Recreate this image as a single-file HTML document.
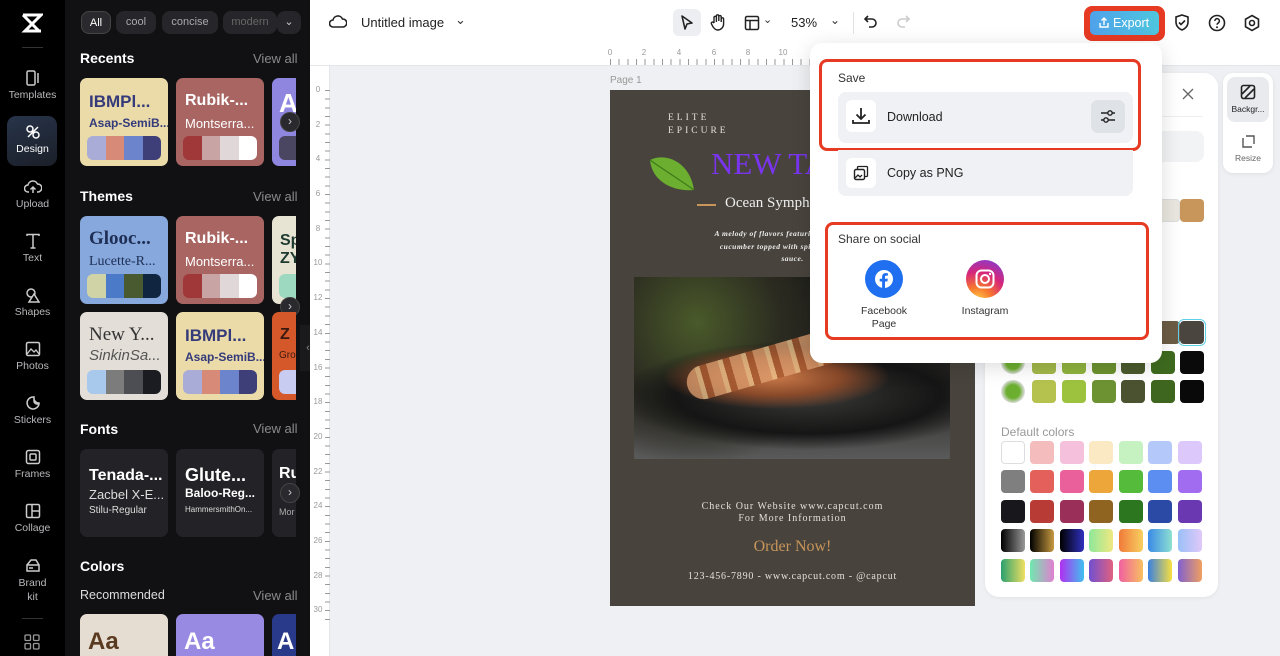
<!DOCTYPE html>
<html><head><meta charset="utf-8"><style>
*{box-sizing:border-box;margin:0;padding:0}
body{width:1280px;height:656px;overflow:hidden;position:relative;font-family:"Liberation Sans",sans-serif;background:#eef0f3}
.a{position:absolute}
.rail{left:0;top:0;width:65px;height:656px;background:#000;overflow:hidden}
.ri{position:absolute;left:0;width:65px;text-align:center;color:#b8b8bc;font-size:10.5px}
.ri svg{display:block;margin:0 auto 3px}
.panel{left:65px;top:0;width:245px;height:656px;background:#111113;overflow:hidden}
.chip{position:absolute;top:11px;height:23px;border-radius:8px;background:#26262a;color:#a8a8ac;font-size:11px;line-height:23px;text-align:center}
.h{position:absolute;left:15px;color:#fff;font-weight:bold;font-size:14px}
.va{position:absolute;left:188px;color:#8a8a8e;font-size:13px}
.card{position:absolute;width:88px;height:88px;border-radius:7px;overflow:hidden}
.card .t1{position:absolute;left:9px;top:14px;font-weight:bold;font-size:16px;white-space:nowrap}
.card .t2{position:absolute;left:9px;top:38px;font-size:12px;white-space:nowrap}
.pal{position:absolute;left:7px;top:58px;width:74px;height:24px;border-radius:6px;overflow:hidden;display:flex}
.pal i{flex:1}
.arr{position:absolute;width:20px;height:20px;border-radius:50%;background:#2a2a2e;border:1px solid #444;color:#ccc;font-size:12px;line-height:17px;text-align:center}
.top{left:310px;top:0;width:970px;height:46px;background:#fff}
.sw{position:absolute;width:24px;height:23px;border-radius:4px}
.ser{font-family:"Liberation Serif",serif}
.tn{position:absolute;top:48px;font-size:8px;color:#999;width:16px;text-align:center}
.ln{position:absolute;left:311px;font-size:8px;color:#999;width:14px;text-align:center}
</style></head><body>

<!-- left rail -->
<div class="a rail">
 <svg class="a" style="left:21px;top:13px" width="22" height="20" viewBox="0 0 22 20"><path d="M2 2h18L4 18h16M2 2l16 16M4 2l14 0" stroke="#fff" stroke-width="3" fill="none"/></svg>
 <div class="a" style="left:22px;top:47px;width:21px;height:1px;background:#333"></div>
 <div class="ri" style="top:70px"><svg width="16" height="16"><rect x="2" y="1" width="8" height="14" rx="1.5" fill="none" stroke="#ccc" stroke-width="1.5"/><path d="M13 3v10" stroke="#ccc" stroke-width="1.5"/></svg>Templates</div>
 <div class="a" style="left:7px;top:116px;width:50px;height:50px;border-radius:9px;background:linear-gradient(160deg,#27344a,#1b1f28)"></div>
 <div class="ri" style="top:124px;color:#fff"><svg width="16" height="16"><circle cx="5" cy="5" r="3" fill="none" stroke="#fff" stroke-width="1.5"/><circle cx="11" cy="11" r="3" fill="none" stroke="#fff" stroke-width="1.5"/><path d="M3 13L13 3" stroke="#fff" stroke-width="1.5"/></svg>Design</div>
 <div class="ri" style="top:179px"><svg width="18" height="16"><path d="M5 13H4a3.5 3.5 0 010-7 5 5 0 019.5-1A3.5 3.5 0 0114 13h-1M9 14V8M6.5 10.5L9 8l2.5 2.5" fill="none" stroke="#ccc" stroke-width="1.5"/></svg>Upload</div>
 <div class="ri" style="top:233px"><svg width="16" height="16"><path d="M2 3V1.5h12V3M8 1.5V15M5.5 15h5" fill="none" stroke="#ccc" stroke-width="1.5"/></svg>Text</div>
 <div class="ri" style="top:287px"><svg width="16" height="16"><circle cx="6" cy="6" r="4" fill="none" stroke="#ccc" stroke-width="1.5"/><path d="M9 7l5 8H4z" fill="#000" stroke="#ccc" stroke-width="1.5"/></svg>Shapes</div>
 <div class="ri" style="top:341px"><svg width="16" height="16"><rect x="1.5" y="1.5" width="13" height="13" rx="1.5" fill="none" stroke="#ccc" stroke-width="1.5"/><path d="M2 13l4-5 3 3 2-2 3 4" fill="none" stroke="#ccc" stroke-width="1.3"/></svg>Photos</div>
 <div class="ri" style="top:395px"><svg width="16" height="16"><path d="M14 9A6 6 0 118 2h1a5 5 0 005 6z M9 2v4a3 3 0 003 3h2" fill="none" stroke="#ccc" stroke-width="1.5"/></svg>Stickers</div>
 <div class="ri" style="top:449px"><svg width="16" height="16"><rect x="1.5" y="1.5" width="13" height="13" rx="2" fill="none" stroke="#ccc" stroke-width="1.5"/><rect x="5" y="5" width="6" height="6" rx="1" fill="none" stroke="#ccc" stroke-width="1.5"/></svg>Frames</div>
 <div class="ri" style="top:503px"><svg width="16" height="16"><rect x="1.5" y="1.5" width="13" height="13" rx="1.5" fill="none" stroke="#ccc" stroke-width="1.5"/><path d="M7 2v12M7 8h7" stroke="#ccc" stroke-width="1.5"/></svg>Collage</div>
 <div class="ri" style="top:557px;line-height:14px"><svg width="16" height="16"><path d="M2 8h12v6H2zM2 8l4-5h5l3 5M4 11h4" fill="none" stroke="#ccc" stroke-width="1.5"/></svg>Brand<br>kit</div>
 <div class="a" style="left:22px;top:618px;width:21px;height:1px;background:#333"></div>
 <svg class="a" style="left:24px;top:634px" width="16" height="16"><g fill="none" stroke="#999" stroke-width="1.3"><rect x="1" y="1" width="5.5" height="5.5" rx="1"/><rect x="9.5" y="1" width="5.5" height="5.5" rx="1"/><rect x="1" y="9.5" width="5.5" height="5.5" rx="1"/><rect x="9.5" y="9.5" width="5.5" height="5.5" rx="1"/></g></svg>
</div>

<!-- panel -->
<div class="a panel">
 <div class="chip" style="left:16px;width:30px;color:#fff;background:#2a2a2e;border:1px solid #444">All</div>
 <div class="chip" style="left:51px;width:40px">cool</div>
 <div class="chip" style="left:97px;width:56px">concise</div>
 <div class="chip" style="left:158px;width:54px;color:#666">modern</div>
 <div class="chip" style="left:212px;width:24px;color:#ccc">⌄</div>

 <div class="h" style="top:50px">Recents</div><div class="va" style="top:51px">View all</div>
 <div class="card" style="left:15px;top:78px;background:#eadba9"><div class="t1" style="color:#343a7a;font-size:17px">IBMPl...</div><div class="t2" style="color:#343a7a;font-weight:bold">Asap-SemiB...</div><div class="pal"><i style="background:#a9acd6"></i><i style="background:#d88a78"></i><i style="background:#6c84cc"></i><i style="background:#3e3f78"></i></div></div>
 <div class="card" style="left:111px;top:78px;background:#a86562"><div class="t1" style="color:#fff">Rubik-...</div><div class="t2" style="color:#fff;font-size:13px">Montserra...</div><div class="pal"><i style="background:#a0383a"></i><i style="background:#c9a4a4"></i><i style="background:#e0d8d8"></i><i style="background:#fff"></i></div></div>
 <div class="card" style="left:207px;top:78px;width:24px;background:#8f86e0;border-radius:7px 0 0 7px"><div class="t1" style="color:#fff;font-size:26px;left:7px;top:10px">A</div><div class="pal" style="background:#4a4560"></div></div>
 <div class="arr" style="left:215px;top:112px">›</div>

 <div class="h" style="top:188px">Themes</div><div class="va" style="top:189px">View all</div>
 <div class="card" style="left:15px;top:216px;background:#86a8dc"><div class="t1 ser" style="color:#1e2e55;font-size:19px;top:12px">Glooc...</div><div class="t2 ser" style="color:#1e2e55;font-size:14px">Lucette-R...</div><div class="pal"><i style="background:#cfd3a6"></i><i style="background:#4a7ac8"></i><i style="background:#4a5a30"></i><i style="background:#102640"></i></div></div>
 <div class="card" style="left:111px;top:216px;background:#a86562"><div class="t1" style="color:#fff">Rubik-...</div><div class="t2" style="color:#fff;font-size:13px">Montserra...</div><div class="pal"><i style="background:#a0383a"></i><i style="background:#c9a4a4"></i><i style="background:#e0d8d8"></i><i style="background:#fff"></i></div></div>
 <div class="card" style="left:207px;top:216px;width:24px;background:#e8e4d4;border-radius:7px 0 0 7px"><div class="t1" style="color:#1e3a30;left:8px;top:16px">Sp<br>ZY</div><div class="pal" style="background:#9dd8c0"></div></div>
 <div class="arr" style="left:215px;top:297px">›</div>
 <div class="card" style="left:15px;top:312px;background:#e3dfd8"><div class="t1 ser" style="color:#333;font-weight:normal;font-size:19px;top:12px">New Y...</div><div class="t2" style="color:#555;font-style:italic;font-size:15px;top:35px">SinkinSa...</div><div class="pal"><i style="background:#a8c8ec"></i><i style="background:#7c7c7c"></i><i style="background:#4c4e54"></i><i style="background:#1b1c22"></i></div></div>
 <div class="card" style="left:111px;top:312px;background:#eadba9"><div class="t1" style="color:#343a7a;font-size:17px">IBMPl...</div><div class="t2" style="color:#343a7a;font-weight:bold">Asap-SemiB...</div><div class="pal"><i style="background:#a9acd6"></i><i style="background:#d88a78"></i><i style="background:#6c84cc"></i><i style="background:#3e3f78"></i></div></div>
 <div class="card" style="left:207px;top:312px;width:24px;background:#d4582a;border-radius:7px 0 0 7px"><div class="t1" style="color:#3a1a10;left:8px">Z</div><div class="t2" style="color:#3a1a10;font-size:10px;left:7px">Gro</div><div class="pal" style="background:#c8ccf0"></div></div>

 <div class="h" style="top:421px">Fonts</div><div class="va" style="top:421px">View all</div>
 <div class="card" style="left:15px;top:449px;background:#232327"><div class="t1" style="color:#fff;top:18px">Tenada-...</div><div class="t2" style="color:#ddd;font-size:13px;top:38px">Zacbel X-E...</div><div class="t2" style="color:#ddd;font-size:10px;top:56px">Stilu-Regular</div></div>
 <div class="card" style="left:111px;top:449px;background:#232327"><div class="t1" style="color:#fff;top:16px;font-size:18px">Glute...</div><div class="t2" style="color:#fff;font-weight:bold;top:37px">Baloo-Reg...</div><div class="t2" style="color:#ddd;font-size:8px;top:56px">HammersmithOn...</div></div>
 <div class="card" style="left:207px;top:449px;width:24px;background:#232327;border-radius:7px 0 0 7px"><div class="t1" style="color:#fff;left:7px;top:16px">Ru</div><div class="t2" style="color:#aaa;font-size:9px;left:7px;top:58px">Mor</div></div>
 <div class="arr" style="left:215px;top:483px">›</div>

 <div class="h" style="top:558px">Colors</div>
 <div class="a" style="left:15px;top:588px;color:#ddd;font-size:12.5px">Recommended</div><div class="va" style="top:588px">View all</div>
 <div class="card" style="left:15px;top:614px;background:#e6ddd2;height:42px;border-radius:7px 7px 0 0"><div class="t1" style="color:#5a3a20;font-size:24px;top:14px;left:8px">Aa</div></div>
 <div class="card" style="left:111px;top:614px;background:#9889e3;height:42px;border-radius:7px 7px 0 0"><div class="t1" style="color:#fff;font-size:24px;top:14px;left:8px">Aa</div></div>
 <div class="card" style="left:207px;top:614px;width:24px;background:#2a3a8a;height:42px;border-radius:7px 0 0 0"><div class="t1" style="color:#fff;font-size:24px;top:14px;left:5px">A</div></div>
</div>
<div class="a" style="left:300px;top:325px;width:16px;height:46px;background:#1a1a1c;border-radius:0 8px 8px 0;color:#888;font-size:11px;line-height:46px;text-align:center">‹</div>

<!-- canvas rulers -->
<div class="a" style="left:310px;top:46px;width:970px;height:20px;background:#fff;border-bottom:1px solid #e4e6ea"></div>
<div class="a" style="left:610px;top:59px;width:200px;height:6px;background:repeating-linear-gradient(90deg,#999 0 1px,transparent 1px 8.67px)"></div>
<div class="a" style="left:310px;top:66px;width:20px;height:590px;background:#fff;border-right:1px solid #e4e6ea"></div>
<div class="a" style="left:325px;top:90px;width:5px;height:530px;background:repeating-linear-gradient(180deg,#999 0 1px,transparent 1px 8.67px)"></div>
<span class="tn" style="left:602px">0</span><span class="tn" style="left:636px">2</span><span class="tn" style="left:671px">4</span><span class="tn" style="left:706px">6</span><span class="tn" style="left:740px">8</span><span class="tn" style="left:775px">10</span>
<span class="ln" style="top:85px">0</span><span class="ln" style="top:120px">2</span><span class="ln" style="top:154px">4</span><span class="ln" style="top:189px">6</span><span class="ln" style="top:224px">8</span><span class="ln" style="top:258px">10</span><span class="ln" style="top:293px">12</span><span class="ln" style="top:328px">14</span><span class="ln" style="top:363px">16</span><span class="ln" style="top:397px">18</span><span class="ln" style="top:432px">20</span><span class="ln" style="top:467px">22</span><span class="ln" style="top:501px">24</span><span class="ln" style="top:536px">26</span><span class="ln" style="top:571px">28</span><span class="ln" style="top:605px">30</span>

<!-- top bar -->
<div class="a top">
 <svg class="a" style="left:19px;top:14px" width="18" height="16"><path d="M5 13H4a3.5 3.5 0 010-7 5 5 0 019.5-1A3.5 3.5 0 0114 13H5z" fill="none" stroke="#222" stroke-width="1.6"/></svg>
 <div class="a" style="left:51px;top:15px;font-size:13px;color:#222">Untitled image</div>
 <div class="a" style="left:145px;top:12px;font-size:13px;color:#333">⌄</div>
 <div class="a" style="left:363px;top:9px;width:28px;height:27px;border-radius:6px;background:#eceef1"></div>
 <svg class="a" style="left:369px;top:14px" width="16" height="17"><path d="M3 2l10 7-5 1-2 5z" fill="none" stroke="#222" stroke-width="1.6" stroke-linejoin="round"/></svg>
 <svg class="a" style="left:399px;top:13px" width="18" height="18"><path d="M5 10V4.5a1.2 1.2 0 012.4 0V9M7.4 8V3a1.2 1.2 0 012.4 0v5M9.8 8V3.8a1.2 1.2 0 012.4 0V9M12.2 9V6a1.2 1.2 0 012.4 0v5a6 6 0 01-6 6c-2 0-3-1-4.5-3L2.5 11a1.2 1.2 0 012-1.4L5 10" fill="none" stroke="#222" stroke-width="1.4"/></svg>
 <svg class="a" style="left:434px;top:15px" width="16" height="16"><rect x="1.5" y="1.5" width="13" height="13" rx="1.5" fill="none" stroke="#222" stroke-width="1.5"/><path d="M2 5.5h12M6 5.5V14" stroke="#222" stroke-width="1.5"/></svg>
 <div class="a" style="left:453px;top:13px;font-size:11px;color:#333">⌄</div>
 <div class="a" style="left:481px;top:15px;font-size:13px;color:#222">53%</div>
 <div class="a" style="left:520px;top:13px;font-size:12px;color:#333">⌄</div>
 <div class="a" style="left:543px;top:12px;width:1px;height:22px;background:#e2e2e2"></div>
 <svg class="a" style="left:553px;top:14px" width="16" height="16"><path d="M5 2L2 5l3 3M2 5h7a4 4 0 010 8H6" fill="none" stroke="#222" stroke-width="1.6"/></svg>
 <svg class="a" style="left:585px;top:14px" width="16" height="16"><path d="M11 2l3 3-3 3M14 5H7a4 4 0 000 8h3" fill="none" stroke="#ccc" stroke-width="1.6"/></svg>
 <div class="a" style="left:774px;top:6px;width:81px;height:35px;border-radius:8px;background:#e63a22"></div>
 <div class="a" style="left:780px;top:11px;width:69px;height:24px;border-radius:5px;background:linear-gradient(90deg,#4fa2ea,#4ec6de);color:#fff;font-size:12.5px;line-height:24px;padding-left:23px">Export</div>
 <svg class="a" style="left:788px;top:16px" width="12" height="13"><path d="M2 7v4h8V7M6 9V2M3.5 4.5L6 2l2.5 2.5" fill="none" stroke="#fff" stroke-width="1.4"/></svg>
 <svg class="a" style="left:863px;top:13px" width="18" height="19"><path d="M9 2l6 2v5c0 4-3 7-6 8-3-1-6-4-6-8V4z M6 9.5l2 2 4-4" fill="none" stroke="#222" stroke-width="1.6"/></svg>
 <svg class="a" style="left:898px;top:14px" width="18" height="18"><circle cx="9" cy="9" r="7.5" fill="none" stroke="#222" stroke-width="1.6"/><path d="M6.8 7a2.3 2.3 0 114 1.5c-.8.7-1.8 1-1.8 2.3" fill="none" stroke="#222" stroke-width="1.5"/><circle cx="9" cy="13.3" r="1" fill="#222"/></svg>
 <svg class="a" style="left:933px;top:14px" width="18" height="18"><path d="M9 1.5l6.5 3.75v7.5L9 16.5l-6.5-3.75v-7.5z" fill="none" stroke="#222" stroke-width="1.6"/><circle cx="9" cy="9" r="2.5" fill="none" stroke="#222" stroke-width="1.6"/></svg>
</div>

<!-- poster -->
<div class="a" style="left:610px;top:75px;font-size:10px;color:#999">Page 1</div>
<div class="a" style="left:610px;top:90px;width:365px;height:516px;background:#48443d;overflow:hidden">
 <div class="a ser" style="left:58px;top:22px;color:#e4e0d8;font-size:9.5px;letter-spacing:3px;line-height:12.5px">ELITE<br>EPICURE</div>
 <svg class="a" style="left:36px;top:62px" width="52" height="42"><path d="M4 8C20 0 44 10 48 38 28 40 6 30 4 8z" fill="#6cae30"/><path d="M4 8C18 18 34 28 48 38" stroke="#3e7a18" stroke-width="1.2" fill="none"/></svg>
 <div class="a ser" style="left:101px;top:56px;color:#7a34f0;font-size:31px;white-space:nowrap">NEW TASTE</div>
 <div class="a" style="left:87px;top:114px;width:19px;height:1.5px;background:#c8955a"></div>
 <div class="a ser" style="left:115px;top:105px;color:#eee;font-size:15px;white-space:nowrap">Ocean Symphony</div>
 <div class="a ser" style="left:0;top:138px;width:365px;text-align:center;color:#eee;font-size:7.5px;font-style:italic;font-weight:bold;line-height:12.5px;letter-spacing:.5px">A melody of flavors featuring fresh salmon,<br>cucumber topped with spicy tuna and eel<br>sauce.</div>
 <div class="a" style="left:24px;top:187px;width:316px;height:182px;background:radial-gradient(ellipse 45% 22% at 45% 55%,#c87848 0,#8a4a2a 45%,transparent 80%),radial-gradient(ellipse 60% 30% at 55% 65%,#3a3a38 0,#151515 70%,transparent 100%),radial-gradient(circle at 20% 25%,#4a5a2a 0,#2a2a20 30%,transparent 50%),linear-gradient(180deg,#1a1a18,#2a2826 60%,#5a5a5a 100%)"></div>
 <div class="a" style="left:74px;top:255px;width:180px;height:34px;border-radius:18px;background:repeating-linear-gradient(90deg,#e0a070 0 12px,#f0c890 12px 17px,#a85a30 17px 24px);transform:rotate(-16deg);opacity:.75"></div>
 <div class="a ser" style="left:0;top:411px;width:365px;text-align:center;color:#e4e0d8;font-size:10px;letter-spacing:1px;line-height:12px">Check Our Website www.capcut.com<br>For More Information</div>
 <div class="a ser" style="left:0;top:448px;width:365px;text-align:center;color:#c8955a;font-size:16px">Order Now!</div>
 <div class="a ser" style="left:0;top:481px;width:365px;text-align:center;color:#e4e0d8;font-size:10px;letter-spacing:.8px">123-456-7890 - www.capcut.com - @capcut</div>
</div>

<!-- right side panel -->
<div class="a" style="left:985px;top:73px;width:233px;height:524px;background:#fff;border-radius:14px;box-shadow:0 1px 4px rgba(0,0,0,.06)">
 <svg class="a" style="left:197px;top:15px" width="12" height="12"><path d="M1 1l10 10M11 1L1 11" stroke="#666" stroke-width="1.3"/></svg>
 <div class="a" style="left:15px;top:43px;width:203px;height:1px;background:#eee"></div>
 <div class="a" style="left:15px;top:58px;width:204px;height:31px;border-radius:8px;background:#f2f3f5"></div>
 <div class="a" style="left:16px;top:352px;font-size:12px;color:#999">Default colors</div>
</div>
<div class="sw" style="left:1156px;top:199px;background:#e8e6de;border:1px solid #ddd"></div>
<div class="sw" style="left:1180px;top:199px;background:#c8955a"></div>
<div class="sw" style="left:1156px;top:321px;background:#6c5c45"></div>
<div class="sw" style="left:1180px;top:321px;background:#4a453e;outline:1.5px solid #60d0e8;outline-offset:1px"></div>
<div class="sw" style="left:1001px;top:351px;background:radial-gradient(circle,#6cae30 40%,#ddd 70%);border-radius:50%"></div>
<div class="sw" style="left:1032px;top:351px;background:#a3b84a"></div><div class="sw" style="left:1062px;top:351px;background:#8fb33e"></div><div class="sw" style="left:1092px;top:351px;background:#6c922e"></div><div class="sw" style="left:1121px;top:351px;background:#4b5a2c"></div><div class="sw" style="left:1151px;top:351px;background:#3e6b1f"></div><div class="sw" style="left:1180px;top:351px;background:#0a0a0a"></div>
<div class="sw" style="left:1001px;top:380px;background:radial-gradient(circle,#6cae30 40%,#ddd 70%);border-radius:50%"></div>
<div class="sw" style="left:1032px;top:380px;background:#b5c24e"></div><div class="sw" style="left:1062px;top:380px;background:#9cc23e"></div><div class="sw" style="left:1092px;top:380px;background:#6c9232"></div><div class="sw" style="left:1121px;top:380px;background:#4a5230"></div><div class="sw" style="left:1151px;top:380px;background:#3e661e"></div><div class="sw" style="left:1180px;top:380px;background:#090909"></div>

<div class="sw" style="left:1001px;top:441px;background:#fff;border:1px solid #ddd"></div><div class="sw" style="left:1030px;top:441px;background:#f4bcbc"></div><div class="sw" style="left:1060px;top:441px;background:#f5c0dc"></div><div class="sw" style="left:1089px;top:441px;background:#fbe9c4"></div><div class="sw" style="left:1119px;top:441px;background:#c5f2c0"></div><div class="sw" style="left:1148px;top:441px;background:#b5c8fa"></div><div class="sw" style="left:1178px;top:441px;background:#dcc8fa"></div>
<div class="sw" style="left:1001px;top:470px;background:#7f7f7f"></div><div class="sw" style="left:1030px;top:470px;background:#e4605a"></div><div class="sw" style="left:1060px;top:470px;background:#e9609a"></div><div class="sw" style="left:1089px;top:470px;background:#eca63a"></div><div class="sw" style="left:1119px;top:470px;background:#55bb3a"></div><div class="sw" style="left:1148px;top:470px;background:#5b8ef0"></div><div class="sw" style="left:1178px;top:470px;background:#a26cf0"></div>
<div class="sw" style="left:1001px;top:500px;background:#17171c"></div><div class="sw" style="left:1030px;top:500px;background:#b83b35"></div><div class="sw" style="left:1060px;top:500px;background:#9a2f5a"></div><div class="sw" style="left:1089px;top:500px;background:#8e6420"></div><div class="sw" style="left:1119px;top:500px;background:#2d7620"></div><div class="sw" style="left:1148px;top:500px;background:#2a4aa6"></div><div class="sw" style="left:1178px;top:500px;background:#6a38b0"></div>
<div class="sw" style="left:1001px;top:529px;background:linear-gradient(90deg,#000,#999)"></div><div class="sw" style="left:1030px;top:529px;background:linear-gradient(90deg,#000,#c89a40)"></div><div class="sw" style="left:1060px;top:529px;background:linear-gradient(90deg,#000,#3030c0)"></div><div class="sw" style="left:1089px;top:529px;background:linear-gradient(90deg,#8ee89a,#f0e880)"></div><div class="sw" style="left:1119px;top:529px;background:linear-gradient(90deg,#f07a3a,#f8d060)"></div><div class="sw" style="left:1148px;top:529px;background:linear-gradient(90deg,#3a8ae8,#8ee0d0)"></div><div class="sw" style="left:1178px;top:529px;background:linear-gradient(90deg,#9ac0f8,#e0c8f8)"></div>
<div class="sw" style="left:1001px;top:559px;background:linear-gradient(90deg,#2aa070,#f0e060)"></div><div class="sw" style="left:1030px;top:559px;background:linear-gradient(90deg,#70e8b0,#e080d0)"></div><div class="sw" style="left:1060px;top:559px;background:linear-gradient(90deg,#b030f0,#40c0f0)"></div><div class="sw" style="left:1089px;top:559px;background:linear-gradient(90deg,#7050d0,#e06080)"></div><div class="sw" style="left:1119px;top:559px;background:linear-gradient(90deg,#f060a0,#f8c060)"></div><div class="sw" style="left:1148px;top:559px;background:linear-gradient(90deg,#3a80e0,#f8e040)"></div><div class="sw" style="left:1178px;top:559px;background:linear-gradient(90deg,#8060d0,#f0a060)"></div>

<!-- right rail -->
<div class="a" style="left:1223px;top:73px;width:50px;height:100px;background:#fff;border-radius:10px;box-shadow:0 1px 4px rgba(0,0,0,.08)">
 <div class="a" style="left:4px;top:4px;width:42px;height:45px;border-radius:8px;background:#e8eaee"></div>
 <svg class="a" style="left:17px;top:11px" width="16" height="16"><rect x="1.5" y="1.5" width="13" height="13" rx="2" fill="none" stroke="#222" stroke-width="1.6"/><path d="M2 10L10 2M5 14L14 5" stroke="#222" stroke-width="1.6"/></svg>
 <div class="a" style="left:0;top:31px;width:50px;text-align:center;font-size:8.5px;color:#222">Backgr...</div>
 <svg class="a" style="left:17px;top:61px" width="16" height="16"><path d="M3 4v9h9M6 2h8v8" fill="none" stroke="#555" stroke-width="1.4"/></svg>
 <div class="a" style="left:0;top:80px;width:50px;text-align:center;font-size:8.5px;color:#666">Resize</div>
</div>

<!-- export dropdown -->
<div class="a" style="left:810px;top:43px;width:352px;height:320px;background:#fff;border-radius:12px;box-shadow:0 4px 20px rgba(0,0,0,.14)">
 <div class="a" style="left:9px;top:16px;width:322px;height:92px;border:3.5px solid #e63a22;border-radius:8px"></div>
 <div class="a" style="left:28px;top:28px;font-size:12px;color:#333">Save</div>
 <div class="a" style="left:28px;top:49px;width:295px;height:51px;border-radius:8px;background:#eff1f4"></div>
 <div class="a" style="left:36px;top:57px;width:30px;height:32px;border-radius:6px;background:#fff"></div>
 <svg class="a" style="left:41px;top:64px" width="20" height="18"><path d="M10 1v11M5.5 7.5L10 12l4.5-4.5M2 13v3h16v-3" fill="none" stroke="#222" stroke-width="1.8"/></svg>
 <div class="a" style="left:77px;top:67px;font-size:12.5px;color:#222">Download</div>
 <div class="a" style="left:281px;top:57px;width:34px;height:33px;border-radius:7px;background:#dfe2e7"></div>
 <svg class="a" style="left:290px;top:66px" width="16" height="15"><path d="M1 4h14M1 11h14" stroke="#222" stroke-width="1.4"/><circle cx="10" cy="4" r="2.2" fill="#dfe2e7" stroke="#222" stroke-width="1.4"/><circle cx="6" cy="11" r="2.2" fill="#dfe2e7" stroke="#222" stroke-width="1.4"/></svg>
 <div class="a" style="left:28px;top:107px;width:295px;height:46px;border-radius:0 0 8px 8px;background:#eff1f4"></div>
 <div class="a" style="left:36px;top:115px;width:30px;height:30px;border-radius:6px;background:#fff"></div>
 <svg class="a" style="left:43px;top:122px" width="16" height="16"><rect x="1.5" y="4.5" width="10" height="10" rx="1.5" fill="none" stroke="#222" stroke-width="1.4"/><path d="M4.5 4.5V2.5A1 1 0 015.5 1.5H13.5A1 1 0 0114.5 2.5V10.5A1 1 0 0113.5 11.5H11.5M2 13l3-3 2 2 2-2" fill="none" stroke="#222" stroke-width="1.3"/></svg>
 <div class="a" style="left:77px;top:123px;font-size:12.5px;color:#222">Copy as PNG</div>
 <div class="a" style="left:15px;top:179px;width:324px;height:118px;border:3.5px solid #e63a22;border-radius:8px"></div>
 <div class="a" style="left:28px;top:189px;font-size:12px;color:#333">Share on social</div>
 <div class="a" style="left:55px;top:217px;width:38px;height:38px;border-radius:50%;background:#1f6ff0"></div>
 <svg class="a" style="left:64px;top:226px" width="20" height="20"><circle cx="10" cy="10" r="9" fill="#fff"/><path d="M11 20v-7.5h2.4l.4-2.8H11V8c0-.8.3-1.4 1.4-1.4h1.5V4.2c-.3 0-1.2-.1-2.2-.1-2.2 0-3.6 1.3-3.6 3.7v1.9H5.7v2.8h2.4V20z" fill="#1f6ff0"/></svg>
 <div class="a" style="left:34px;top:262px;width:80px;text-align:center;font-size:10.5px;color:#333;line-height:13px">Facebook<br>Page</div>
 <div class="a" style="left:156px;top:217px;width:38px;height:38px;border-radius:50%;background:radial-gradient(circle at 30% 110%,#fdd44a 0,#f7762e 30%,#d6267a 60%,#8a3ac8 90%)"></div>
 <svg class="a" style="left:164px;top:225px" width="22" height="22"><rect x="2.5" y="2.5" width="17" height="17" rx="5" fill="none" stroke="#fff" stroke-width="2"/><circle cx="11" cy="11" r="4" fill="none" stroke="#fff" stroke-width="2"/><circle cx="16" cy="6" r="1.2" fill="#fff"/></svg>
 <div class="a" style="left:135px;top:262px;width:80px;text-align:center;font-size:10.5px;color:#333">Instagram</div>
</div>
</body></html>
